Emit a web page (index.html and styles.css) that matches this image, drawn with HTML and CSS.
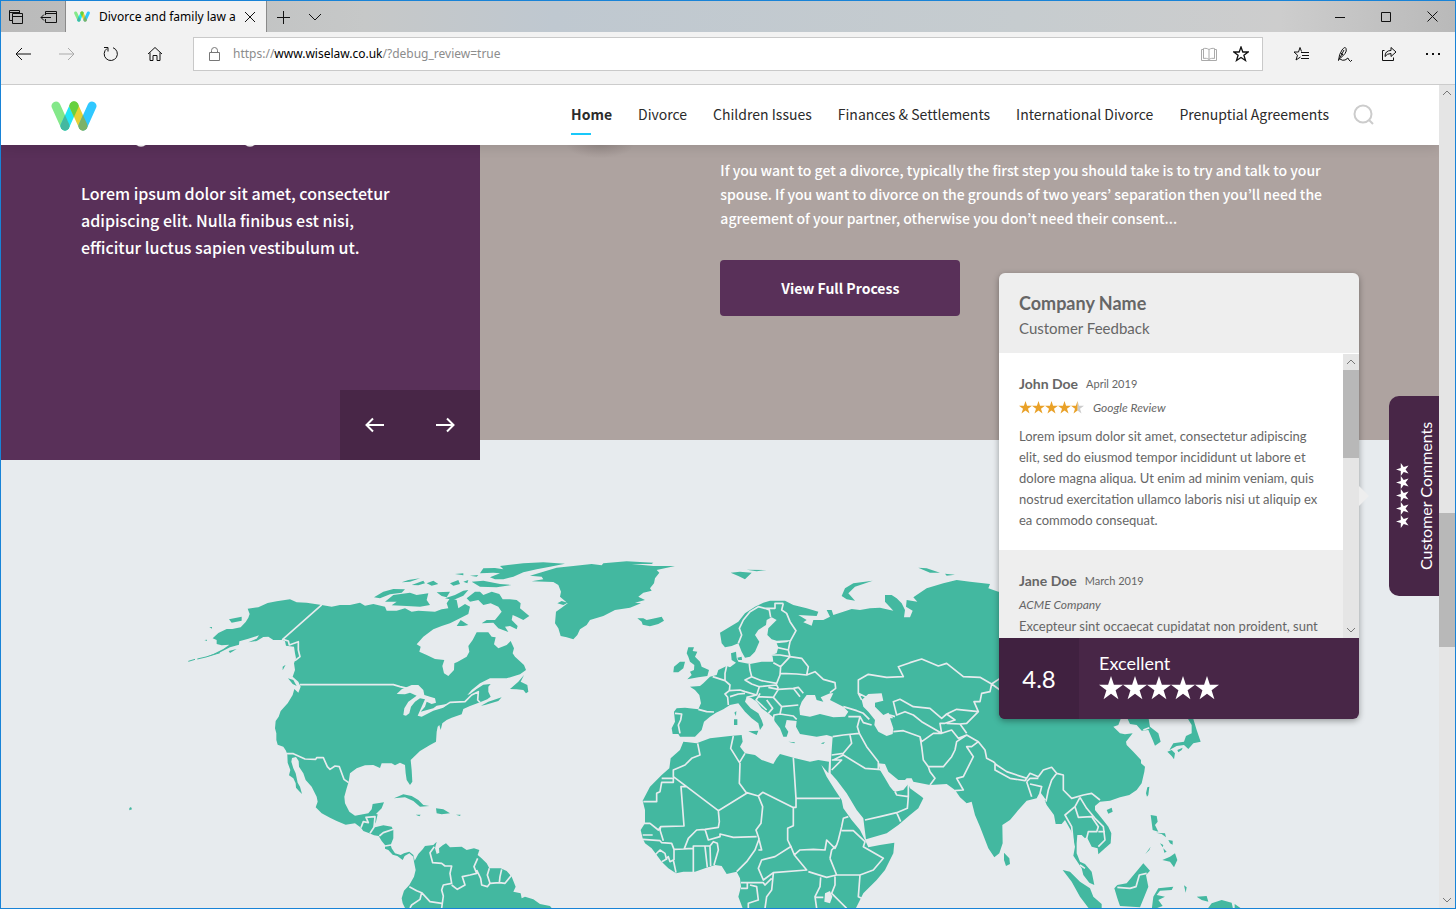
FILE: index.html
```html
<!DOCTYPE html>
<html lang="en">
    <head>
        <meta charset="utf-8">
        <title>Divorce and family law</title>
        <meta name="viewport" content="width=device-width, initial-scale=1.0">
        <link rel="stylesheet" href="styles.css">
    </head>
    <body>
        <svg class="defs" width="0" height="0" aria-hidden="true">
            <symbol id="star" viewBox="0 0 24 24"><path d="M12 0l2.9 8.8H24l-7.4 5.5 2.8 8.9L12 17.7l-7.4 5.5 2.8-8.9L0 8.8h9.1z"/></symbol>
            <symbol id="logo" viewBox="0 0 46 30">
                <g fill="none" stroke-width="9" stroke-linecap="round">
                    <path stroke="#84e88a" d="M5 5l9 20"/>
                    <path stroke="#22e6f7" d="M14 25l9-20"/>
                    <path stroke="#e5d135" d="M23 5l9 20"/>
                    <path stroke="#30c8ff" d="M32 25l9-20"/>
                </g>
                <path fill="#44b8a0" d="M14 14l4.200 9.200a4.600 4.600 0 1 1-8.400 0z"/>
                <path fill="#66d13e" d="M23 16l-4.200-9.200a4.600 4.600 0 1 1 8.400 0z"/>
                <path fill="#7cb268" d="M32 14l4.200 9.200a4.600 4.600 0 1 1-8.400 0z"/>
            </symbol>
            <symbol id="up" viewBox="0 0 10 6"><path d="M1 5l4-4 4 4" fill="none" stroke="#777"/></symbol>
            <symbol id="down" viewBox="0 0 10 6"><path d="M1 1l4 4 4-4" fill="none" stroke="#777"/></symbol>
        </svg>

        <div class="window">
            <div class="tabbar">
                <div class="tab-tools">
                    <button aria-label="Tabs set aside"><svg width="16" height="16"><path d="M4.500 11.500h-3v-10h10v3M1.500 3.500h10M4.500 4.500h10v10h-10zM4.500 7.500h10"/></svg></button>
                    <button aria-label="Set tabs aside"><svg width="18" height="16"><path d="M5.500 6V2.500h11v11h-11V10M5.500 4.500h11M1 8.500h10M4 5.500l-3 3 3 3"/></svg></button>
                </div>
                <div class="tab">
                    <svg class="tab-logo"><use href="#logo"/></svg>
                    <span class="tab-title">Divorce and family law a</span>
                    <button aria-label="Close tab"><svg width="12" height="12"><path d="M1 1l10 10M11 1L1 11"/></svg></button>
                </div>
                <button class="tab-add" aria-label="New tab"><svg width="14" height="14"><path d="M7.500 1v13M1 7.500h13"/></svg></button>
                <button class="tab-add" aria-label="Tab previews"><svg width="14" height="8"><path d="M1 1l6 6 6-6"/></svg></button>
                <div class="win-buttons">
                    <button aria-label="Minimize"><svg width="10" height="10"><path d="M0 5.500h10"/></svg></button>
                    <button aria-label="Maximize"><svg width="10" height="10"><path d="M.5.5h9v9h-9z"/></svg></button>
                    <button aria-label="Close"><svg width="11" height="11"><path d="M.5.5l10 10M10.500.5l-10 10"/></svg></button>
                </div>
            </div>

            <div class="toolbar">
                <div class="nav-buttons">
                    <button aria-label="Back"><svg width="16" height="14"><path d="M1 7h15M7 1L1 7l6 6"/></svg></button>
                    <button class="off" aria-label="Forward"><svg width="16" height="14"><path d="M0 7h15M9 1l6 6-6 6"/></svg></button>
                    <button aria-label="Refresh"><svg width="16" height="16"><path d="M4 2.500a6.600 6.600 0 1 0 6-.8M1 1.500h4v4"/></svg></button>
                    <button aria-label="Home"><svg width="16" height="16"><path d="M1 8l7-6.500L15 8M3 6.500v8h3v-5h4v5h3v-8"/></svg></button>
                </div>
                <div class="address">
                    <svg class="lock" width="12" height="14"><path d="M.5 5.500h10v8H.5zM2.500 5.500V3.500a3 3 0 0 1 6 0v2"/></svg>
                    <div class="url" role="textbox" aria-label="Address" contenteditable="true" spellcheck="false">https://<span>www.wiselaw.co.uk</span>/?debug_review=true</div>
                    <button class="off" aria-label="Reading view"><svg width="16" height="15"><path d="M8 2.500c-2-1.300-4-1.300-5.500-1v10c2-.5 4-.2 5.500 1 1.500-1.200 3.500-1.500 5.500-1v-10c-1.500-.3-3.500-.3-5.500 1zM8 2.500v10M2.500 2.500h-2v11h15v-11h-2"/></svg></button>
                    <button aria-label="Add to favorites"><svg width="16" height="16"><path stroke-width="1.300" d="M8 1l1.800 5h5.400l-4.300 3.300 1.600 5.200L8 11.500l-4.500 3 1.600-5.200L.8 6h5.400z"/></svg></button>
                </div>
                <div class="tool-buttons">
                    <button aria-label="Hub"><svg width="17" height="16"><path d="M8.500 5.500L7 1.500 5.500 6H1l3.500 3.200L3 14l4.500-3M8 6.500h8M9 9.500h7M8 12.500h8"/></svg></button>
                    <button aria-label="Add notes"><svg width="16" height="16"><path d="M1.500 14.500Q2 8 5 4t4-1.500T8 7.500 3.500 12M1.500 14.500L7 4M4 7l2 2M3 13q2.500 2 5 1t2.500-2 1.500 2 3 0"/></svg></button>
                    <button aria-label="Share"><svg width="16" height="16"><path d="M3.500 4.500h-2v10h11v-3M4 10.500q0-6 6-6V1.500L15 6l-5 4.500v-3q-4 0-6 3z"/></svg></button>
                    <button aria-label="More"><svg width="16" height="4"><path stroke-width="2" stroke-dasharray="2 4" d="M1 2h14"/></svg></button>
                </div>
            </div>

            <div class="viewport">
                <div class="page">
                    <header class="header">
                        <a href="#" aria-label="Wiselaw"><svg class="logo"><use href="#logo"/></svg></a>
                        <nav class="menu">
                            <a class="active" href="#">Home</a>
                            <a href="#">Divorce</a>
                            <a href="#">Children Issues</a>
                            <a href="#">Finances &amp; Settlements</a>
                            <a href="#">International Divorce</a>
                            <a href="#">Prenuptial Agreements</a>
                        </nav>
                        <button class="search" aria-label="Search"><svg width="22" height="22"><path d="M16 16l4 4M10 1.500a8.500 8.500 0 1 0 0 17 8.500 8.500 0 0 0 0-17z"/></svg></button>
                    </header>

                    <section class="hero">
                        <div class="panel">
                            <p>Lorem ipsum dolor sit amet, consectetur adipiscing elit. Nulla finibus est nisi, efficitur luctus sapien vestibulum ut.</p>
                            <div class="arrows">
                                <button aria-label="Previous"><svg width="20" height="16"><path d="M19 8H2M8 1.500L1.500 8 8 14.500"/></svg></button>
                                <button aria-label="Next"><svg width="20" height="16"><path d="M1 8h17M12 1.500L18.500 8 12 14.500"/></svg></button>
                            </div>
                        </div>
                        <div class="process">
                            <p>If you want to get a divorce, typically the first step you should take is to try and talk to your spouse. If you want to divorce on the grounds of two years’ separation then you’ll need the agreement of your partner, otherwise you don’t need their consent...</p>
                            <button class="view">View Full Process</button>
                        </div>
                    </section>

                    <section class="map">
                        <svg viewBox="1 440 1438 468" preserveAspectRatio="xMidYMin slice" role="img" aria-label="World map">
                            <!-- the Americas -->
                            <g class="land" transform="translate(250 540) scale(.33333)">
                                <path d="M120 178L80 184 53 189 25 202-7 206-1 222-5 233-13 246-28 262-53 267-70 267-95 279-112 295-100 300-100 312-85 316-62 314-80 327-110 342-132 351-95 340-60 322-33 314-32 304-5 296 27 286 20 296-5 307 20 303 40 291 55 290 70 300 98 300 105 304 108 317 132 320 135 340 138 355 132 370 135 390 128 410 145 425 152 440 145 458 133 447 128 465 113 490 92 513 86 530 77 543 75 565 79 580 79 600 83 614 100 620 108 632 112 645 113 668 121 690 117 706 130 715 137 730 138 743 147 753 156 762 150 740 143 728 137 700 130 685 124 665 126 654 138 651 146 663 147 680 160 700 167 720 185 740 200 770 203 785 197 802 215 820 240 833 260 843 287 854 315 850 333 863 340 873 358 880 372 886 386 888 395 903 405 915 405 926 415 930 428 944 442 948 458 960 464 948 478 940 490 950 492 965 497 990 492 1010 478 1035 462 1052 455 1075 458 1090 468 1110 910 1110 900 1098 870 1092 850 1078 825 1070 815 1075 812 1060 790 1055 797 1040 785 1010 770 993 752 985 718 985 710 970 693 953 683 945 688 930 672 925 650 930 635 920 600 922 588 910 578 916 567 925 568 938 560 942 555 925 560 905 550 915 525 918 518 928 505 942 494 962 490 945 478 935 462 940 452 945 435 940 425 925 422 915 430 895 430 870 425 860 400 856 375 862 370 860 378 845 383 823 378 822 395 805 402 787 368 792 365 808 355 820 315 827 298 815 285 790 283 770 290 745 296 725 300 700 320 685 345 676 370 675 390 684 395 670 425 670 435 676 450 668 465 675 467 700 470 720 480 735 487 725 485 690 482 660 510 633 540 615 558 605 560 575 563 560 568 555 572 570 577 550 590 540 605 533 635 523 640 507 660 498 690 487 712 478 722 470 715 455 715 440 722 432 700 434 680 447 660 462 652 465 665 450 690 430 720 415 770 415 810 403 828 390 822 375 795 350 788 340 792 325 782 303 770 315 745 325 732 313 737 292 725 290 715 277 680 277 668 300 655 318 658 335 650 350 622 366 613 370 612 390 595 408 582 400 577 378 583 360 555 357 530 345 508 335 512 320 500 313 520 290 550 268 575 258 600 250 630 235 655 222 660 200 645 192 625 205 620 180 600 175 590 190 595 205 575 208 555 215 505 212 485 215 465 205 440 212 410 212 405 200 370 192 345 197 330 188 300 195 270 195 245 200 215 195 170 188 140 187z"/>
                                <path d="M372 172L400 155 430 147 465 148 455 158 420 163 390 175zM405 185L430 165 480 158 500 165 535 160 530 180 540 195 510 200 470 198 425 196 440 185zM455 127L475 120 510 115 480 125zM485 135L520 122 525 130 505 136zM530 130L550 122 565 132 545 137zM560 157L600 155 590 172 575 168zM600 130L625 120 630 132 610 137zM615 102L640 100 640 106zM585 175L615 165 640 152 655 150 640 167 610 180zM640 125L655 120 652 130zM650 175L675 155 690 155 700 165 725 155 748 162 758 178 780 178 800 180 812 190 810 205 838 228 820 240 800 230 788 225 785 240 803 258 800 268 780 258 765 260 775 276 745 265 730 248 695 250 710 240 735 240 755 215 745 200 722 190 700 195 685 180 660 185zM620 258L632 240 655 255 640 258zM690 100L700 85 735 84 760 88 750 78 820 70 880 67 945 71 900 80 860 88 820 97 790 110 760 118 735 118 720 112 750 100 730 98zM665 125L700 122 750 132 785 135 740 142 690 140zM660 107L685 105 680 110zM780 447L805 425 822 405 812 425 832 435 835 455 828 460 820 450 800 448zM693 497L715 485 755 472 745 483 705 495zM114 415L130 420 140 438 128 432zM98 380L107 374 98 391zM432 775L460 763 485 768 505 780 520 795 538 798 510 800 490 783 465 772zM558 805L580 808 600 820 575 823 560 820zM497 824L512 824 508 829zM618 824L632 824 630 828zM-63 238L-25 230-25 242-55 248zM-64 333L-40 327-60 339zM-122 261h8v5zM-137 300l8-1v4zM-362 804l5-3 3 7-8 3z"/>
                                <path class="coast" d="M-185 364L-165 358M-158 357L-132 351-90 338"/>
                                <path class="water" d="M440 462L455 448 485 435 505 435 520 450 523 465 540 470 555 475 558 488 545 492 530 485 525 500 512 515 550 505 560 497 590 492 580 503 550 512 515 530 503 527 515 500 525 478 510 475 495 485 483 500 478 520 468 527 460 525 463 505 475 485 500 467 480 458 465 463z"/>
                                <path class="border" d="M150 434H430L450 440 475 446M580 500L600 487 645 485 665 465 685 455 683 480 690 487M108 641L130 641 165 657 197 658 200 653 220 653 232 680 240 688 255 678 268 680 282 718 296 728M215 195L98 298 115 303 118 315 145 305 145 330 150 350 135 362M333 863L340 845 355 848 348 832 375 830 372 862 360 880M388 888L400 878 430 868M405 918L423 915M553 920L540 938 548 968 575 970 585 978 605 978 600 1000 605 1030 580 1035 575 1050 580 1068 575 1104M605 1035L622 1048 645 1035 637 1010 660 1005 680 1000 672 980 683 955M680 990L692 1015 695 1035 712 1040 720 1030 712 1005 718 985M720 1030L748 1028 750 1010 755 988M748 1028L765 1030 785 1005M478 1040L500 1052 515 1058 510 1078 485 1095 480 1104M515 1058L540 1085 575 1090"/>
                            </g>
                            <!-- Greenland and the North Atlantic -->
                            <g class="land" transform="translate(500 540) scale(.33333)">
                                <path d="M90 107L130 95 170 83 220 78 275 72 305 76 310 70 380 64 460 68 455 72 395 72 460 78 525 78 470 90 478 98 465 115 462 130 450 145 455 152 430 158 415 170 435 180 405 188 423 190 390 203 345 210 310 228 270 240 260 255 240 268 232 285 220 298 200 292 182 288 175 265 165 250 168 215 185 203 203 190 180 170 183 155 175 135 160 126 95 124 130 118 125 110zM172 190L185 183 203 188 190 195zM412 235L430 235 440 240 465 235 485 230 492 242 475 252 450 259 428 254 425 245zM560 340L565 322 582 322 578 333 592 335 585 350 600 365 605 380 627 390 622 408 595 412 562 418 575 405 570 395 582 390 583 375 570 365 565 350zM522 380L540 365 555 365 550 385 535 397 520 397z"/>
                            </g>
                            <!-- Europe, Africa and Asia -->
                            <g class="land" transform="translate(630 560) scale(.33333)">
                                <path d="M128 522L125 505 135 485 132 455 140 445 165 443 205 448 213 430 208 405 195 390 180 380 210 378 220 370 240 350 260 345 265 330 290 318 300 322 318 308 305 300 303 280 318 275 320 295 325 305 340 308 360 312 395 305 430 305 428 290 425 285 440 280 445 262 440 250 470 247 485 240 440 242 425 238 412 225 415 205 440 180 425 172 410 180 408 195 385 210 375 225 388 245 375 275 360 290 345 293 335 275 325 250 305 258 285 262 275 250 270 218 300 200 325 185 345 160 375 140 400 128 420 122 465 122 490 135 530 145 565 155 560 168 505 165 530 180 520 187 545 197 550 180 580 180 600 170 590 150 605 150 610 165 640 155 665 147 690 150 720 145 750 143 790 152 765 125 765 105 785 105 800 115 815 130 825 150 822 172 840 172 848 152 828 140 830 120 862 125 850 112 890 85 940 70 980 60 1020 65 1080 72 1075 85 1105 95 1500 110 1700 250 1480 420 1472 477 1465 495 1450 500 1470 520 1485 523 1508 520 1488 545 1490 555 1510 575 1533 600 1533 610 1545 620 1543 635 1535 670 1520 690 1498 705 1470 712 1440 722 1410 725 1395 738 1395 750 1415 775 1435 800 1444 820 1442 850 1425 865 1405 883 1403 865 1385 860 1370 830 1365 835 1355 825 1342 825 1340 850 1340 880 1350 905 1365 912 1385 935 1393 975 1378 968 1360 945 1355 925 1330 887 1335 860 1325 815 1305 780 1295 792 1277 792 1272 765 1250 735 1240 710 1228 700 1220 715 1190 722 1165 750 1140 780 1117 795 1118 850 1108 880 1093 892 1075 865 1050 800 1035 765 1025 725 1010 730 990 712 975 690 950 672 900 675 850 665 845 655 830 655 825 660 805 660 775 635 765 612 745 610 750 630 765 655 780 680 790 692 795 695 820 690 835 672 840 685 875 710 880 715 865 745 840 765 805 795 770 820 708 838 703 800 700 775 680 750 650 700 620 660 602 640 603 600 605 570 608 530 590 525 560 530 510 522 498 500 500 483 470 480 465 500 475 515 470 530 460 530 450 505 435 485 428 470 415 460 395 445 380 425 365 415 350 410 345 425 362 445 385 460 395 480 400 495 390 510 385 490 365 475 345 455 325 430 300 435 280 448 258 458 240 470 222 485 215 510 195 530 165 530 150 530 145 522z"/>
                                <path d="M160 545L175 547 200 550 240 535 300 528 335 525 338 545 330 560 345 580 375 585 395 600 430 612 440 595 450 582 490 593 540 605 565 600 597 605 595 640 574 615 590 650 615 690 635 720 640 745 665 780 690 810 705 840 715 862 750 855 793 848 790 880 765 930 740 960 700 1000 675 1050 340 1050 325 1010 333 980 330 955 320 935 290 942 275 918 255 915 225 925 195 935 160 935 138 940 115 925 95 905 80 885 65 865 45 850 38 835 32 810 45 790 45 750 38 722 60 680 95 645 118 625 122 595 150 570z"/>
                                <path d="M355 514L385 512 380 525zM312 478L322 478 322 495 312 495zM313 458L319 453 318 468zM475 545L495 547 493 550zM572 550L585 546 580 552zM322 293L335 290 336 300 325 300zM302 38L330 35 365 38 345 58 325 48zM350 29L410 30 380 34zM635 108L645 85 670 70 728 62 675 80 655 100 675 122 650 118zM865 23L890 25 930 38 900 38zM945 41L975 44 950 47zM1122 878L1138 895 1140 912 1128 918 1122 900z"/>
                                <path class="water" d="M508 445L515 425 530 405 555 405 560 420 580 425 572 412 600 400 610 400 600 420 640 440 655 455 645 470 610 472 570 462 540 470 510 465zM695 420L715 402 755 400 760 422 735 428 735 440 760 465 775 458 790 475 780 475 790 505 788 522 770 528 745 515 733 495 735 480 715 455 700 440zM585 1000L600 993 607 1010 600 1030 583 1025zM780 665L787 668 785 680z"/>
                                <!-- European borders -->
                                <path class="border" d="M135 460L155 462 152 480 145 495 150 520M205 448L230 455 252 456M248 350L285 362 285 340 290 318M285 362L300 375 298 392 285 402 293 412 295 435M298 392L330 390 345 395 380 405 388 380 365 372 345 360 365 350 360 330 358 312M300 410L325 402 345 400M365 350L395 362 440 370 450 345 452 320 430 308M388 380L440 375 445 385M390 400L385 410 430 412 445 388 415 382M380 405L350 412M385 410L378 420 410 450M430 412L455 440 505 435M410 420L428 445 415 460M455 440L450 462 432 465 430 480M450 462L490 468 500 478M445 388L490 385 510 410M490 385L505 382 520 400M452 340L500 342 530 345 555 335 580 358 615 368 617 385 600 398M452 320L480 290 515 295 535 320 530 345M425 285L450 285 480 290 475 270 480 245 498 212 480 185 470 160 455 150 460 130M440 262L475 270M325 250L335 225 328 205 340 180 360 155 385 140 405 145 418 150 422 172M405 145L435 145 435 130 460 130"/>
                                <!-- African borders -->
                                <path class="border" d="M203 550L210 585 185 595 165 615 130 630V650L265 752 350 700 328 670 330 610 302 565 310 528M95 655H130V667H95L90 695 80 700V725H40M153 680H165M130 650L170 680 153 680 162 798 92 800 85 810 60 790 40 790M38 825H68M38 838L90 842 95 848 125 850 132 868 190 865M92 800L90 810 100 842M330 605L345 580M350 698L385 708 398 697 488 742 490 742 490 797 473 805 473 840 485 865 493 885 530 930 430 938 400 960 385 925 395 900 435 890 485 858M490 593L498 715 498 742 488 742M498 715H630M385 708L398 740 393 790 378 810 385 830 395 870 385 870M265 752L268 785 265 802 225 808 200 810 175 835 162 868M225 808L235 840 270 830 270 822 310 832 380 830M190 938L190 858 240 858 250 845 262 850 265 870 252 915M225 860L232 922M240 858L242 918M138 938L130 900 120 905 115 890 105 900 95 905M75 885L90 870 105 880 110 900M132 868V900M320 935L350 905 375 870 388 835M333 968H400L405 975 425 955M333 985H352V970M405 1045L410 1010 425 990 430 940M355 1045V1030L385 1020 380 980 360 975M493 885L510 870 550 868 585 870 590 840 615 865 620 855 625 840 635 800 640 775 655 770M600 895L620 945 590 952 535 935M600 895L605 870 620 855M635 812L670 812 705 845 700 860 760 895 730 930 690 945 620 945M690 945L685 1010 695 1015M615 945L615 975 605 1000 650 1045M572 952L570 980 555 1010 560 1045M555 1012H580"/>
                                <!-- Asian borders -->
                                <path class="border" d="M608 530L640 525 688 520 682 500 690 470 655 470M640 440L680 452 700 460 718 478M690 470L700 488 725 495M688 520L710 560 745 605 745 628 705 625 640 585 610 600M660 525L665 550 640 580 605 585M605 600L635 600 605 630M745 628L765 630M795 695L800 705 835 710 835 672M835 710L832 745 800 758 750 770 705 780M800 758L812 785M790 515L820 512 870 530 875 560 880 600 895 620 940 620 965 590 975 570 980 545 1010 525 985 535 965 510 935 520 910 520 875 545 870 530M895 620L900 635 915 655 900 675M1010 525L1045 545 1025 560 1010 560 1030 590 1000 650 980 655 1000 690 975 692M1045 545L1065 570 1070 595 1090 605 1100 615 1130 635 1175 650 1190 655 1185 662 1140 655 1095 630 1095 610M1190 655L1200 640 1225 650 1240 630 1265 622 1280 640 1300 645 1300 690 1325 715 1360 705 1385 700 1410 720M1190 665L1200 655 1225 655M1190 665L1205 710M1200 672L1235 680 1230 700 1245 720M1280 640L1265 660 1255 690 1248 725M1350 712L1370 745 1395 775 1420 800 1425 840 1405 860M1350 712L1335 740 1345 772 1385 770 1405 800 1400 815 1375 815 1370 835M1335 740L1305 765 1325 800 1330 850M1405 815L1425 815M1350 915L1365 925M695 420L685 400 685 360 715 343 770 352 820 350 805 320 840 308 875 297 925 318 950 310 1000 350 1050 352 1085 372 1110 355M1085 372L1110 390M1085 372L1080 395 1055 400 1050 425 1032 425 1045 455 1010 490 990 492 1010 520M685 400L715 415M1045 455L980 448 950 462 935 475 900 445 850 440 810 418 790 425 800 465 825 455 850 465 875 485 935 520M950 462L975 480 945 490 930 490 935 520M950 490L990 492M795 470L780 465"/>
                            </g>
                            <!-- Far East and the islands -->
                            <g class="land" transform="translate(1030 700) scale(.33333)">
                                <path d="M470 50L490 57 500 90 512 125 490 130 475 147 462 135 440 138 418 150 430 130 462 125 468 108 485 100 485 75zM412 155L425 150 435 160 432 178 425 168zM442 150L458 143 455 150 445 157zM290 50L355 50 360 80 385 100 392 125 375 137 368 120 355 90 335 92 320 75 300 72zM348 280L352 262 358 260 355 285 351 290zM230 330L245 323 248 335 235 341zM362 345L380 348 383 365 375 375 385 395 368 390zM378 398L405 400 408 412 395 402zM390 430L400 435 398 442zM415 420L428 422 428 434 420 430zM400 445L410 455 403 458zM397 480L420 470 435 460 442 480 432 502 420 485zM346 462L362 440 358 450zM98 510L120 515 150 545 180 565 190 590 215 612 215 630 180 630 150 590 125 545zM253 565L262 555 290 550 315 520 340 490 360 512 348 525 355 560 345 585 330 622 270 618 262 595zM365 630L370 590 385 565 430 560 425 570 390 572 380 585 405 590 385 600 398 618zM462 556L470 562 467 578zM500 590L530 588 535 605 515 600zM530 630L545 610 575 600 605 608 610 630zM614 612L640 630H614z"/>
                                <path class="border" d="M262 562L300 565 318 560 328 525 350 520M358 83L340 90"/>
                            </g>
                        </svg>
                    </section>

                    <aside class="reviews">
                        <div class="reviews-head">
                            <h2>Company Name</h2>
                            <p>Customer Feedback</p>
                        </div>
                        <div class="reviews-body">
                            <div class="list">
                                <article class="review">
                                    <div class="who"><h3>John Doe</h3><span>April 2019</span></div>
                                    <div class="source">
                                        <span class="stars gold" role="img" aria-label="4.5 stars"><svg><use href="#star"/></svg><svg><use href="#star"/></svg><svg><use href="#star"/></svg><svg><use href="#star"/></svg><svg viewBox="0 0 24 24"><path fill="#ccc" d="M12 0l2.900 8.800H24l-7.400 5.500 2.800 8.900L12 17.700z"/><path d="M12 0v17.700l-7.400 5.500 2.800-8.900L0 8.800h9.100z"/></svg></span>
                                        <em>Google Review</em>
                                    </div>
                                    <p>Lorem ipsum dolor sit amet, consectetur adipiscing elit, sed do eiusmod tempor incididunt ut labore et dolore magna aliqua. Ut enim ad minim veniam, quis nostrud exercitation ullamco laboris nisi ut aliquip ex ea commodo consequat.</p>
                                </article>
                                <article class="review">
                                    <div class="who"><h3>Jane Doe</h3><span>March 2019</span></div>
                                    <div class="source"><em>ACME Company</em></div>
                                    <p>Excepteur sint occaecat cupidatat non proident, sunt</p>
                                </article>
                            </div>
                            <div class="bar bar-list">
                                <svg><use href="#up"/></svg>
                                <div class="thumb"></div>
                                <svg class="last"><use href="#down"/></svg>
                            </div>
                        </div>
                        <div class="reviews-foot">
                            <div class="score">4.8</div>
                            <div class="rating">
                                <p>Excellent</p>
                                <span class="stars big" role="img" aria-label="5 stars"><svg><use href="#star"/></svg><svg><use href="#star"/></svg><svg><use href="#star"/></svg><svg><use href="#star"/></svg><svg><use href="#star"/></svg></span>
                            </div>
                        </div>
                    </aside>

                    <button class="side-tab">
                        <span class="stars side"><svg><use href="#star"/></svg><svg><use href="#star"/></svg><svg><use href="#star"/></svg><svg><use href="#star"/></svg><svg><use href="#star"/></svg></span>
                        <span>Customer Comments</span>
                    </button>
                </div>
                <div class="bar bar-page">
                    <svg><use href="#up"/></svg>
                    <div class="thumb"></div>
                    <svg class="last"><use href="#down"/></svg>
                </div>
            </div>
        </div>
    </body>
</html>
```

FILE: styles.css
```css
*{
    margin: 0;
    padding: 0;
    box-sizing: border-box;
}
body{
    font-family: "Noto Sans CJK KR", "Open Sans", sans-serif;
    color: #2b2b2b;
    overflow: hidden;
}
button{
    border: 0;
    background: none;
    font: inherit;
    color: inherit;
    cursor: pointer;
    display: flex;
    align-items: center;
    justify-content: center;
}
a{
    color: inherit;
    text-decoration: none;
}
svg{
    display: block;
}
.defs{
    position: absolute;
}
.window{
    height: 100vh;
    display: flex;
    flex-direction: column;
    border: 1px solid #1883d7;
}

/* browser chrome */
.tabbar{
    display: flex;
    height: 31px;
    flex: none;
    background: linear-gradient(90deg, #bababa, #c6c8c8 25%, #bfc8d0 38%, #c6cccf 70%, #cdcdcd 88%, #b9b9b9);
}
.tabbar svg,
.toolbar svg{
    fill: none;
    stroke: #111;
}
.tab-tools{
    display: flex;
    width: 65px;
    padding: 0 7px;
    justify-content: space-between;
    border-right: 1px solid #8a8a8a;
}
.tab{
    display: flex;
    align-items: center;
    width: 201px;
    padding: 0 10px 0 8px;
    background: #f2f2f2;
    border-right: 1px solid #8a8a8a;
}
.tab .tab-logo{
    width: 16px;
    height: 11px;
    flex: none;
    stroke: none;
}
.tab-title{
    flex: 1;
    margin: 0 6px 0 9px;
    overflow: hidden;
    white-space: nowrap;
    font-family: "Noto Sans", sans-serif;
    font-size: 12px;
    line-height: 16px;
    color: #000;
}
.tab-add{
    width: 32px;
}
.win-buttons{
    display: flex;
    margin-left: auto;
}
.win-buttons button{
    width: 46px;
}
.toolbar{
    display: flex;
    align-items: flex-start;
    flex: none;
    height: 53px;
    padding-top: 5px;
    background: #f2f2f2;
    border-bottom: 1px solid #ccc;
}
.nav-buttons,
.tool-buttons{
    display: flex;
    height: 34px;
}
.nav-buttons{
    width: 192px;
}
.nav-buttons button,
.tool-buttons button{
    width: 44px;
}
.tool-buttons{
    padding-left: 16px;
}
.toolbar .off svg{
    stroke: #aaa;
}
.address{
    display: flex;
    align-items: center;
    flex: 1;
    height: 34px;
    padding: 0 5px 0 15px;
    background: #fff;
    border: 1px solid #c9c9c9;
}
.toolbar .lock{
    stroke: #777;
}
.address button{
    width: 32px;
    height: 32px;
}
.url{
    flex: 1;
    margin-left: 12px;
    font-family: "Noto Sans", sans-serif;
    font-size: 12px;
    line-height: 20px;
    color: #8c8c8c;
    outline: 0;
}
.url span{
    color: #000;
}
.viewport{
    display: flex;
    flex: 1;
    min-height: 0;
}
.bar{
    display: flex;
    flex-direction: column;
    align-items: center;
    flex: none;
    width: 16px;
    background: #e5e5e5;
}
.bar svg{
    width: 10px;
    height: 6px;
    margin: 5px 0;
    flex: none;
}
.bar .last{
    margin-top: auto;
}
.thumb{
    width: 100%;
    background: #b8b8b8;
}
.bar-page .thumb{
    height: 134px;
    margin-top: 412px;
}

/* page */
.page{
    position: relative;
    flex: 1;
    overflow: hidden;
    background: #e7ebee;
}
.header{
    position: relative;
    z-index: 2;
    display: flex;
    align-items: center;
    height: 60px;
    padding: 0 64px 0 50px;
    background: #fff;
    box-shadow: 0 2px 12px rgba(0, 0, 0, .12);
}
.logo{
    width: 46px;
    height: 30px;
    margin-top: 2px;
}
.menu{
    display: flex;
    gap: 26px;
    margin-left: auto;
    font-size: 14px;
    line-height: 24px;
}
.menu a{
    padding: 5px 0 7px;
}
.menu .active{
    font-weight: bold;
}
.menu .active:after{
    content: '';
    display: block;
    width: 20px;
    height: 2px;
    margin: 7px 0 -9px;
    background: #19c8fa;
}
.search{
    margin-left: 24px;
}
.search svg{
    fill: none;
    stroke: #ccc;
    stroke-width: 2;
}
.hero{
    position: relative;
    z-index: 1;
    display: flex;
    align-items: flex-start;
    color: #fff;
    background: #aea3a0;
}
.panel{
    display: flex;
    flex-direction: column;
    width: 33.333%;
    height: 315px;
    margin-bottom: -20px;
    padding: 35px 0 0 80px;
    background:
        radial-gradient(ellipse 5px 2px at 140px 0, #fff 60%, transparent),
        radial-gradient(ellipse 5px 2px at 249px 0, #fff 60%, transparent),
        #593059;
}
.panel p{
    max-width: 320px;
    font-size: 16px;
    line-height: 27px;
    font-weight: 500;
}
.arrows{
    display: flex;
    align-self: flex-end;
    margin-top: auto;
    background: #482647;
}
.arrows button{
    width: 70px;
    height: 70px;
}
.arrows svg{
    fill: none;
    stroke: #fff;
    stroke-width: 2;
}
.process{
    flex: 1;
    height: 295px;
    padding: 13px 100px 0 240px;
    background: radial-gradient(ellipse 34px 13px at 120px 0, rgba(60, 50, 50, .2), rgba(60, 50, 50, 0));
}
.process p{
    font-size: 14px;
    line-height: 24px;
    font-weight: 500;
}
.view{
    width: 240px;
    height: 56px;
    margin-top: 30px;
    border-radius: 4px;
    background: #593059;
    font-size: 14px;
    font-weight: bold;
}
.map svg{
    width: 100%;
    height: auto;
}
.land{
    fill: #43b8a0;
}
.coast{
    fill: none;
    stroke: #43b8a0;
    stroke-width: 3;
}
.water{
    fill: #e7ebee;
}
.border{
    fill: none;
    stroke: #e7ebee;
    stroke-width: 5;
    stroke-linejoin: round;
}

/* customer feedback */
.reviews{
    position: absolute;
    z-index: 3;
    top: 188px;
    right: 80px;
    width: 360px;
    font-family: Lato, sans-serif;
    color: #666;
    border-radius: 6px;
    box-shadow: 0 2px 6px rgba(0, 0, 0, .35);
}
.reviews:after{
    content: '';
    position: absolute;
    top: 213px;
    left: 100%;
    border: 10px solid transparent;
    border-left-color: #eee;
    border-right: 0;
}
.reviews-head{
    height: 80px;
    padding: 17px 20px;
    background: #eee;
    border-radius: 6px 6px 0 0;
}
.reviews-head h2{
    font-size: 18px;
    line-height: 26px;
}
.reviews-head p{
    font-size: 15px;
    line-height: 24px;
}
.reviews-body{
    display: flex;
    height: 285px;
    background: #fff;
}
.list{
    flex: 1;
    overflow: hidden;
}
.review{
    padding: 20px 20px 19px;
}
.review:nth-child(even){
    background: #eee;
}
.who{
    display: flex;
    align-items: center;
    gap: 8px;
    height: 22px;
}
.who h3{
    font-size: 14px;
    line-height: 22px;
}
.who span{
    font-size: 11px;
    line-height: 22px;
}
.source{
    display: flex;
    align-items: center;
    gap: 9px;
    min-height: 24px;
    font-size: 12px;
}
.review p{
    margin-top: 7px;
    font-size: 13px;
    line-height: 21px;
}
.review:nth-child(even) p{
    margin-top: 0;
}
.stars{
    display: flex;
}
.gold svg{
    width: 13px;
    height: 13px;
    fill: #e9a128;
}
.big svg{
    width: 24px;
    height: 24px;
    fill: #fff;
}
.side svg{
    width: 13px;
    height: 13px;
    fill: #fff;
    transform: rotate(90deg);
}
.bar-list{
    margin-top: 1px;
}
.bar-list .thumb{
    height: 88px;
}
.reviews-foot{
    display: flex;
    height: 81px;
    color: #fff;
    background: #482647;
    border-radius: 0 0 6px 6px;
}
.score{
    width: 80px;
    font-size: 24px;
    line-height: 82px;
    text-align: center;
    background: #402140;
    border-radius: 0 0 0 6px;
}
.rating{
    padding: 12px 20px;
}
.rating p{
    font-size: 18px;
    line-height: 26px;
}
.side-tab{
    position: absolute;
    z-index: 3;
    top: 311px;
    right: 0;
    flex-direction: column;
    gap: 5px;
    width: 50px;
    height: 200px;
    padding-right: 6px;
    color: #fff;
    background: #482647;
    border-radius: 0 10px 10px 0;
    font-family: Lato, sans-serif;
    font-size: 16px;
    line-height: 24px;
    writing-mode: vertical-rl;
    transform: rotate(180deg);
}
```
